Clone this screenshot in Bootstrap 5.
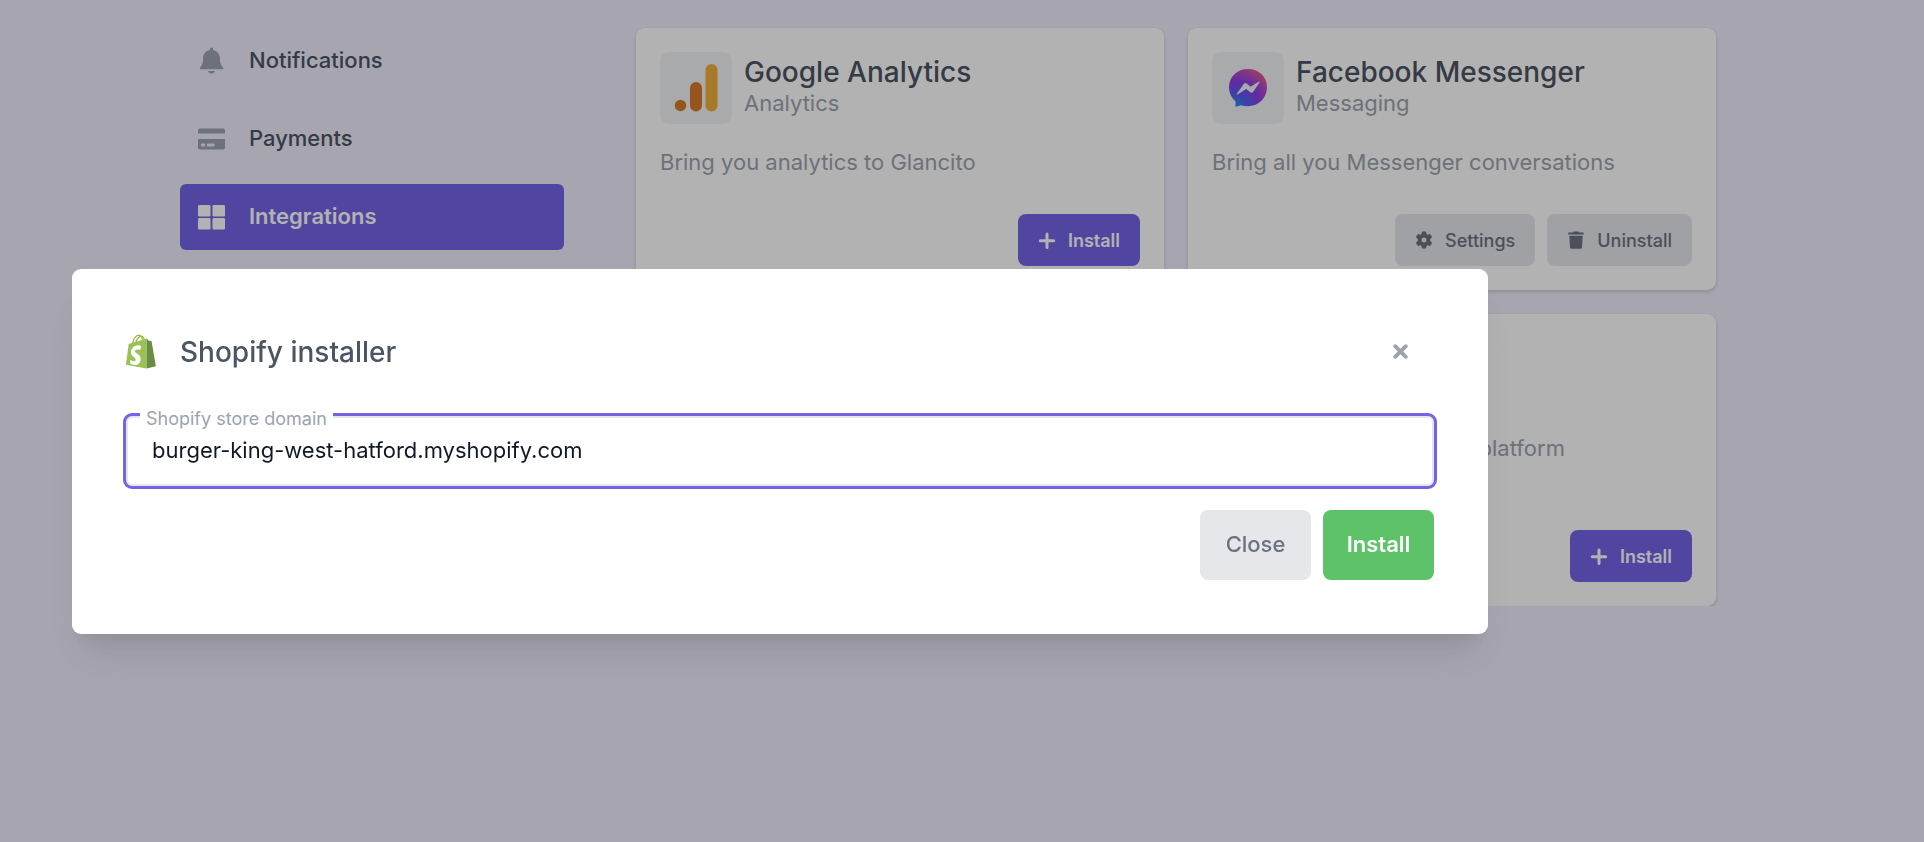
<!DOCTYPE html>
<html lang="en">
<head>
<meta charset="utf-8">
<meta name="viewport" content="width=device-width, initial-scale=1">
<title>Integrations</title>
<link href="https://cdn.jsdelivr.net/npm/bootstrap@5.3.0/dist/css/bootstrap.min.css" rel="stylesheet">
<style>
  :root { --brand: #7364e6; --ink: #4b5563; --soft: #9ca3af; --fill: #e5e7eb; }
  body { background: #f0edfd; color: var(--ink); font-family: Inter, "Liberation Sans", sans-serif; font-size: 22px; line-height: 30px; }
  .shell { display: grid; grid-template-columns: minmax(0, 384px) minmax(0, 1080px); gap: 72px; margin-left: 180px; margin-right: 24px; padding-top: 28px; }
  .side-nav { gap: 12px; }
  .side-nav .nav-link { display: flex; align-items: center; gap: 24px; height: 66px; padding: 0 18px 2px; border-radius: 6px; color: var(--ink); font-weight: 500; }
  .side-nav .nav-link svg { width: 27px; height: 27px; color: var(--soft); }
  .side-nav .nav-link.active { background: var(--brand); color: #fff; font-weight: 600; }
  .side-nav .nav-link.active svg { color: #fff; }
  .apps { display: grid; grid-template-columns: 1fr 1fr; gap: 24px; }
  .app-card { border: 0; border-radius: 9px; padding: 24px; box-shadow: 0 2px 4px rgba(0,0,0,.16); }
  .app-card.lower { grid-column: 2; }
  .app-head { gap: 12px; }
  .app-names { padding-bottom: 5px; }
  .tile { width: 72px; height: 72px; border-radius: 9px; background: #f3f4f6; display: flex; align-items: center; justify-content: center; }
  .app-title { font-size: 28px; line-height: 36px; font-weight: 500; margin: 0; color: var(--ink); }
  .app-kind, .app-text { color: var(--soft); margin: 0; }
  .app-kind { line-height: 27px; }
  .app-text { margin: 23px 0 37px; }
  .lower .app-text { min-height: 60px; }
  .btn-app { display: inline-flex; align-items: center; gap: 12px; height: 52px; padding: 0 20px; border: 0; border-radius: 8px; font-size: 18px; font-weight: 500; }
  .btn-app svg { width: 18px; height: 18px; }
  .btn-brand { background: var(--brand); color: #fff; font-weight: 600; }
  .btn-soft { background: var(--fill); color: #6b7280; }
  .btn-row { gap: 12px; }
  .modal-backdrop.show { opacity: .3; }
  .modal { padding-top: 60px; }
  .installer { max-width: 1416px; margin-left: 72px; margin-right: 72px; }
  .installer .modal-content { border: 0; border-radius: 9px; padding: 54px; box-shadow: 0 30px 38px -8px rgba(0,0,0,.1), 0 15px 15px -8px rgba(0,0,0,.06); }
  .installer-head { height: 58px; margin-bottom: 35px; padding-right: 20px; }
  .installer-title { font-size: 28px; line-height: 36px; font-weight: 500; color: var(--ink); margin: 0; }
  .brand-gap { gap: 24px; }
  .x-btn { border: 0; background: none; padding: 6px; line-height: 0; color: var(--soft); }
  .domain { position: relative; }
  .domain input { height: 70px; padding: 0 24px 2px; border: 2px solid var(--fill); border-radius: 6px; box-shadow: 0 0 0 3px var(--brand); font-size: 22px; color: #111827; }
  .domain input:focus { border-color: var(--fill); box-shadow: 0 0 0 3px var(--brand); }
  .domain label { position: absolute; left: 14px; top: -9px; padding: 0 6px; background: #fff; color: var(--soft); font-size: 18px; line-height: 24px; }
  .installer-foot { gap: 12px; margin-top: 24px; }
  .btn-big { height: 70px; min-width: 111px; padding: 0 20px; border: 0; border-radius: 8px; font-size: 22px; font-weight: 500; }
  .btn-go { background: #5ec269; color: #fff; font-weight: 600; }
</style>
</head>
<body>
<main class="shell">
  <nav class="nav flex-column side-nav" aria-label="Settings">
    <a class="nav-link" href="#notifications">
      <svg viewBox="0 0 27 27" fill="currentColor"><path d="M13.500 .5a1.600 1.600 0 0 1 1.600 1.600v.9c4 .8 6.800 4 6.800 8.200 0 5 1.200 7 2.900 9 .8 1 .3 2.100-.9 2.100H3.100c-1.200 0-1.700-1.100-.9-2.100 1.700-2 2.900-4 2.900-9 0-4.200 2.800-7.400 6.800-8.200v-.9A1.600 1.600 0 0 1 13.500.5zM10 24h7c-.3 1.600-1.500 2.500-3.500 2.500S10.300 25.600 10 24z"/></svg>
      <span>Notifications</span>
    </a>
    <a class="nav-link" href="#payments">
      <svg viewBox="0 0 27 27" fill="currentColor"><path d="M2 3.500h23a2 2 0 0 1 2 2V8.500H0V5.500a2 2 0 0 1 2-2zM0 14h27v8.500a2 2 0 0 1-2 2H2a2 2 0 0 1-2-2zM3.700 18.500a.6.6 0 0 0-.6.6v1.800c0 .4.200.6.600.6h2.800c.4 0 .6-.2.6-.6v-1.800a.6.6 0 0 0-.6-.6zM9.600 18.500a.6.600 0 0 0-.6.600v1.800c0 .4.2.6.6.6h6.300c.4 0 .6-.2.6-.6v-1.800a.6.6 0 0 0-.6-.6z" fill-rule="evenodd"/></svg>
      <span>Payments</span>
    </a>
    <a class="nav-link active" href="#integrations" aria-current="page">
      <svg viewBox="0 0 27 27" fill="currentColor"><rect y="2" width="12.500" height="11.500" rx="1.300"/><rect x="14.500" y="2" width="12.500" height="11.500" rx="1.300"/><rect y="15" width="12.500" height="11.500" rx="1.300"/><rect x="14.500" y="15" width="12.500" height="11.500" rx="1.300"/></svg>
      <span>Integrations</span>
    </a>
  </nav>

  <section class="apps">
    <article class="card app-card">
      <div class="d-flex align-items-center app-head">
        <div class="tile">
          <svg width="48" height="48" viewBox="0 0 48 48"><circle cx="8.500" cy="41.500" r="5.800" fill="#d97a2b"/><rect x="18" y="18" width="12" height="29.500" rx="6" fill="#d97a2b"/><rect x="33.500" y="0" width="12" height="47.500" rx="6" fill="#f0ae3c"/></svg>
        </div>
        <div class="app-names">
          <h2 class="app-title">Google Analytics</h2>
          <p class="app-kind">Analytics</p>
        </div>
      </div>
      <p class="app-text">Bring you analytics to Glancito</p>
      <div class="d-flex justify-content-end btn-row mt-auto">
        <button type="button" class="btn btn-app btn-brand"><svg viewBox="0 0 18 18" stroke="currentColor" stroke-width="3" stroke-linecap="round"><path d="M9 3v13.500M2.300 9.700h13.400"/></svg>Install</button>
      </div>
    </article>
    <article class="card app-card">
      <div class="d-flex align-items-center app-head">
        <div class="tile">
          <svg width="40" height="40" viewBox="0 0 40 40"><defs><radialGradient id="msg" cx=".15" cy="1" r="1.200"><stop offset="0" stop-color="#2f8df5"/><stop offset=".3" stop-color="#5a5af0"/><stop offset=".55" stop-color="#8a3de8"/><stop offset=".75" stop-color="#b04ac8"/><stop offset="1" stop-color="#f4646c"/></radialGradient></defs><path d="M20 1C9.300 1 1 8.700 1 19.200c0 5.500 2.300 10.200 6 13.500.3.300.5.700.5 1.100l.1 5.300 5.200-1.800c2.200.6 4.600.9 7.200.9 10.700 0 19-8.300 19-19S30.700 1 20 1z" fill="url(#msg)"/><path d="M8.700 26 15.700 16q1.300-1.500 2.900-.5l4 3.200 8.400-5.200q1-.3.600.7l-6.300 9.600q-1.200 1.700-2.900.4l-4.300-3.200-8.600 5.600q-1.200.3-.8-.6z" fill="#f3f4f6"/></svg>
        </div>
        <div class="app-names">
          <h2 class="app-title">Facebook Messenger</h2>
          <p class="app-kind">Messaging</p>
        </div>
      </div>
      <p class="app-text">Bring all you Messenger conversations</p>
      <div class="d-flex justify-content-end btn-row mt-auto">
        <button type="button" class="btn btn-app btn-soft"><svg viewBox="0 0 18 18" fill="currentColor" fill-rule="evenodd"><path d="M7.300.8h3.400l.6 2.400 1.400.8 2.300-.8 1.800 3-1.800 1.900v1.800l1.800 1.900-1.800 3-2.300-.8-1.400.8-.6 2.400H7.300l-.6-2.400-1.400-.8-2.300.8-1.800-3L3 9.900V8.100L1.200 6.200l1.800-3 2.300.8 1.400-.8zM9 6.200a2.800 2.800 0 1 0 0 5.600 2.800 2.800 0 0 0 0-5.600z" stroke="currentColor" stroke-width=".6" stroke-linejoin="round"/></svg>Settings</button>
        <button type="button" class="btn btn-app btn-soft"><svg viewBox="0 0 18 18" fill="currentColor"><path d="M6.500.6h5l.6.9h4.100c.4 0 .6.200.6.600v1c0 .3-.2.500-.5.500H1.700c-.3 0-.5-.2-.5-.5v-1c0-.4.200-.6.600-.6h4.100zM2.300 4.800h13.400l-.7 11.400c-.1 1-.8 1.600-1.700 1.600H4.700c-.9 0-1.600-.6-1.700-1.600z"/></svg>Uninstall</button>
      </div>
    </article>
    <article class="card app-card lower">
      <div class="d-flex align-items-center app-head">
        <div class="tile"></div>
        <div class="app-names">
          <h2 class="app-title">Shopify</h2>
          <p class="app-kind">Commerce</p>
        </div>
      </div>
      <p class="app-text">Connect to Shopify trade platform</p>
      <div class="d-flex justify-content-end btn-row mt-auto">
        <button type="button" class="btn btn-app btn-brand"><svg viewBox="0 0 18 18" stroke="currentColor" stroke-width="3" stroke-linecap="round"><path d="M9 3v13.500M2.300 9.700h13.400"/></svg>Install</button>
      </div>
    </article>
  </section>
</main>

<div class="modal-backdrop show"></div>
<div class="modal show d-block" role="dialog" aria-modal="true" aria-labelledby="installer-title" tabindex="-1">
  <div class="modal-dialog modal-dialog-centered installer">
    <form class="modal-content">
      <div class="installer-head d-flex align-items-center justify-content-between">
        <div class="d-flex align-items-center brand-gap">
          <svg width="30" height="35" viewBox="0.500 0 30 35"><path d="M7.300 9C8 4.500 10.800 1.200 13.600 1.200c2.200 0 3.300 2.500 3.500 6.300M10.500 8.200C11.200 5 13.500 2.200 15.700 2.200c1.900 0 2.700 1.600 3.100 4" fill="none" stroke="#95bf47" stroke-width="1.300"/><path d="M3.200 10.100 21.300 4.600 21 34.500.4 30.800z" fill="#9bc155"/><path d="M21.300 4.600 23.300 6.800 26 7.100 30.400 32.300 21 34.500z" fill="#688e45"/><path d="m15.800 12.300-1.200 3.800s-1.300-.7-2.800-.6c-2.200.1-2.200 1.500-2.200 1.900.1 2 5.300 2.500 5.600 7.200.2 3.700-2 6.300-5.100 6.500-3.800.2-5.800-2-5.800-2l.8-3.400s2 1.600 3.700 1.500c1.100-.1 1.500-1 1.400-1.600-.1-2.600-4.400-2.500-4.700-6.800-.2-3.600 2.100-7.200 7.300-7.500 2-.1 3 1 3 1z" fill="#fff"/></svg>
          <h1 class="installer-title" id="installer-title">Shopify installer</h1>
        </div>
        <button type="button" class="x-btn" aria-label="Close dialog"><svg width="15" height="15" viewBox="0 0 15 15" stroke="currentColor" stroke-width="3.800" stroke-linecap="round"><path d="m2.200 2.200 10.600 10.600M12.800 2.200 2.200 12.800"/></svg></button>
      </div>
      <div class="domain">
        <input type="text" class="form-control" id="domain" value="burger-king-west-hatford.myshopify.com">
        <label for="domain">Shopify store domain</label>
      </div>
      <div class="installer-foot d-flex justify-content-end">
        <button type="button" class="btn btn-big btn-soft">Close</button>
        <button type="submit" class="btn btn-big btn-go">Install</button>
      </div>
    </form>
  </div>
</div>
<script src="https://cdn.jsdelivr.net/npm/bootstrap@5.3.0/dist/js/bootstrap.bundle.min.js"></script>
</body>
</html>
